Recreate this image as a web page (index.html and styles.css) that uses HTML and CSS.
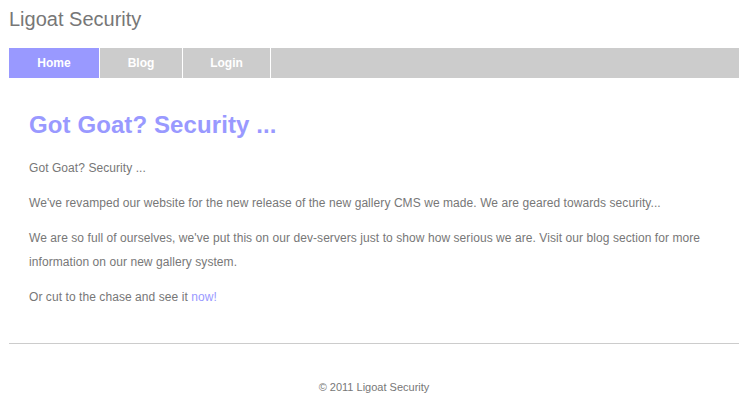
FILE: index.html
```
<!DOCTYPE html>
<html>
<head>
<meta charset="utf-8">
<link rel="stylesheet" href="styles.css">
</head>
<body>
<div class="wrap">
  <div class="site-title">Ligoat Security</div>
  <ul class="nav">
    <li class="nav-item nav-home active">Home</li>
    <li class="nav-item nav-blog">Blog</li>
    <li class="nav-item nav-login">Login</li>
  </ul>
  <div class="content">
    <h1 class="heading">Got Goat? Security ...</h1>
    <p class="para">Got Goat? Security ...</p>
    <p class="para">We've revamped our website for the new release of the new gallery CMS we made. We are geared towards security...</p>
    <p class="para">We are so full of ourselves, we've put this on our dev-servers just to show how serious we are. Visit our blog section for more information on our new gallery system.</p>
    <p class="para">Or cut to the chase and see it <a class="link" href="#">now!</a></p>
  </div>
  <div class="footer">© 2011 Ligoat Security</div>
</div>
</body>
</html>
```
FILE: styles.css
```
html, body {
  margin: 0;
  padding: 0;
  background: #fff;
}
body {
  font-family: "Liberation Sans", Arial, sans-serif;
  color: #777;
}
.wrap {
  margin: 0 9px;
}
.site-title {
  font-size: 20px;
  line-height: 24px;
  padding-top: 7px;
  height: 41px;
  box-sizing: border-box;
  color: #777;
}
.nav {
  list-style: none;
  margin: 7px 0 0 0;
  padding: 0;
  display: flex;
  background: #ccc;
  height: 30px;
}
.nav-item {
  box-sizing: border-box;
  text-align: center;
  border-right: 1px solid #fff;
  color: #fff;
  font-weight: bold;
  font-size: 12px;
  line-height: 30px;
}
.nav-home { width: 91px; }
.nav-blog { width: 83px; }
.nav-login { width: 88px; }
.nav-item.active {
  background: #9999ff;
}
.content {
  padding: 30px 20px 23px 20px;
  border-bottom: 1px solid #ccc;
}
.heading {
  margin: 0 0 14px 0;
  font-size: 24px;
  line-height: 34px;
  color: #9999ff;
  font-weight: bold;
  letter-spacing: 0.1px;
}
.para {
  margin: 0 0 11px 0;
  font-size: 12px;
  line-height: 24px;
  letter-spacing: 0.07px;
}
.link {
  color: #9999ff;
  text-decoration: none;
}
.footer {
  text-align: center;
  font-size: 11px;
  line-height: 20px;
  padding-top: 33px;
}
```
